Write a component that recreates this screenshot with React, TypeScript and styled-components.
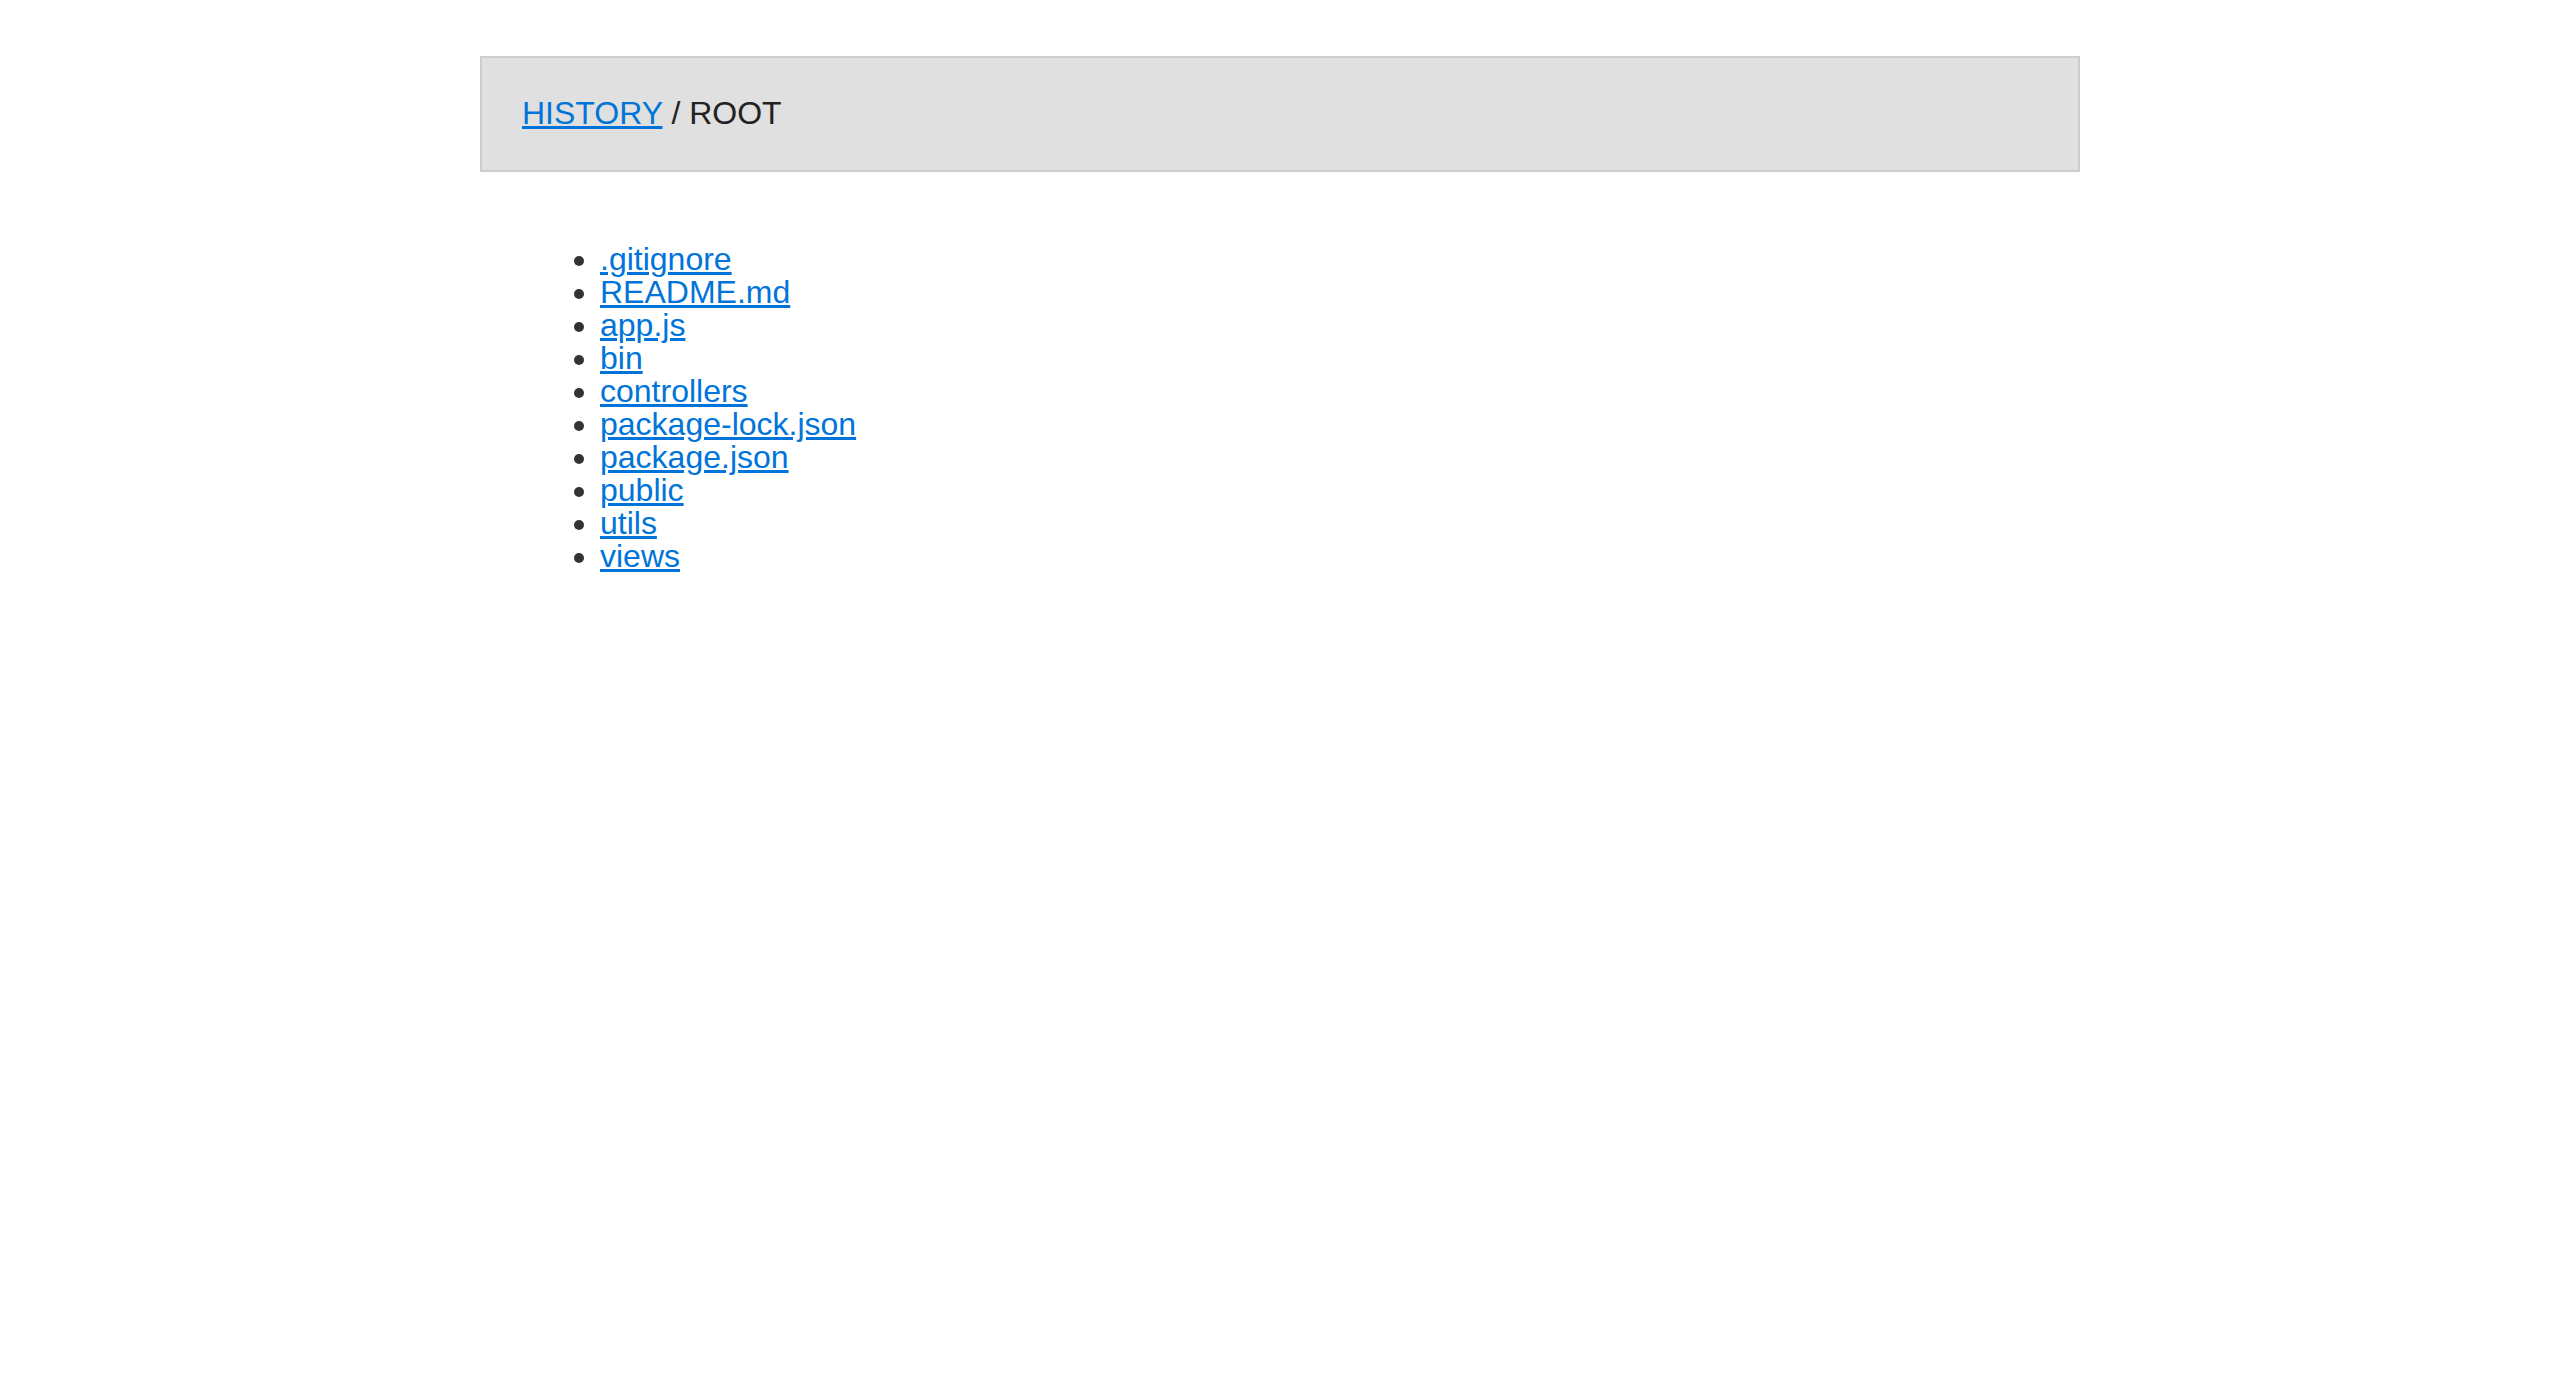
import React from "react";
import styled, { createGlobalStyle } from "styled-components";

const files = [
  ".gitignore",
  "README.md",
  "app.js",
  "bin",
  "controllers",
  "package-lock.json",
  "package.json",
  "public",
  "utils",
  "views",
];

function App(): JSX.Element {
  return (
    <>
      <GlobalStyle />
      <Page>
        <Breadcrumb>
          <Link href="#">HISTORY</Link>
          <Current> / ROOT</Current>
        </Breadcrumb>
        <FileList>
          {files.map((name) => (
            <FileItem key={name}>
              <Link href="#">{name}</Link>
            </FileItem>
          ))}
        </FileList>
      </Page>
    </>
  );
}

export default App;

const GlobalStyle = createGlobalStyle`
  html, body {
    margin: 0;
    padding: 0;
    background: #fff;
  }
  body {
    font-family: "Liberation Sans", Arial, Helvetica, sans-serif;
    font-size: 32px;
    color: #222;
  }
`;

const Page = styled.div`
  max-width: 1600px;
  margin: 56px auto 0;
`;

const Breadcrumb = styled.div`
  background-color: #e0e0e0;
  border: 2px solid #cccccc;
  padding: 39px 40px 41px;
  line-height: 32px;
`;

const Link = styled.a`
  color: #0074d9;
  text-decoration: underline;
`;

const Current = styled.span`
  color: #222;
`;

const FileList = styled.ul`
  margin: 71px 0 0;
  padding: 0 0 0 120px;
  line-height: 33px;
  color: #333;
`;

const FileItem = styled.li`
  list-style: disc;
`;
